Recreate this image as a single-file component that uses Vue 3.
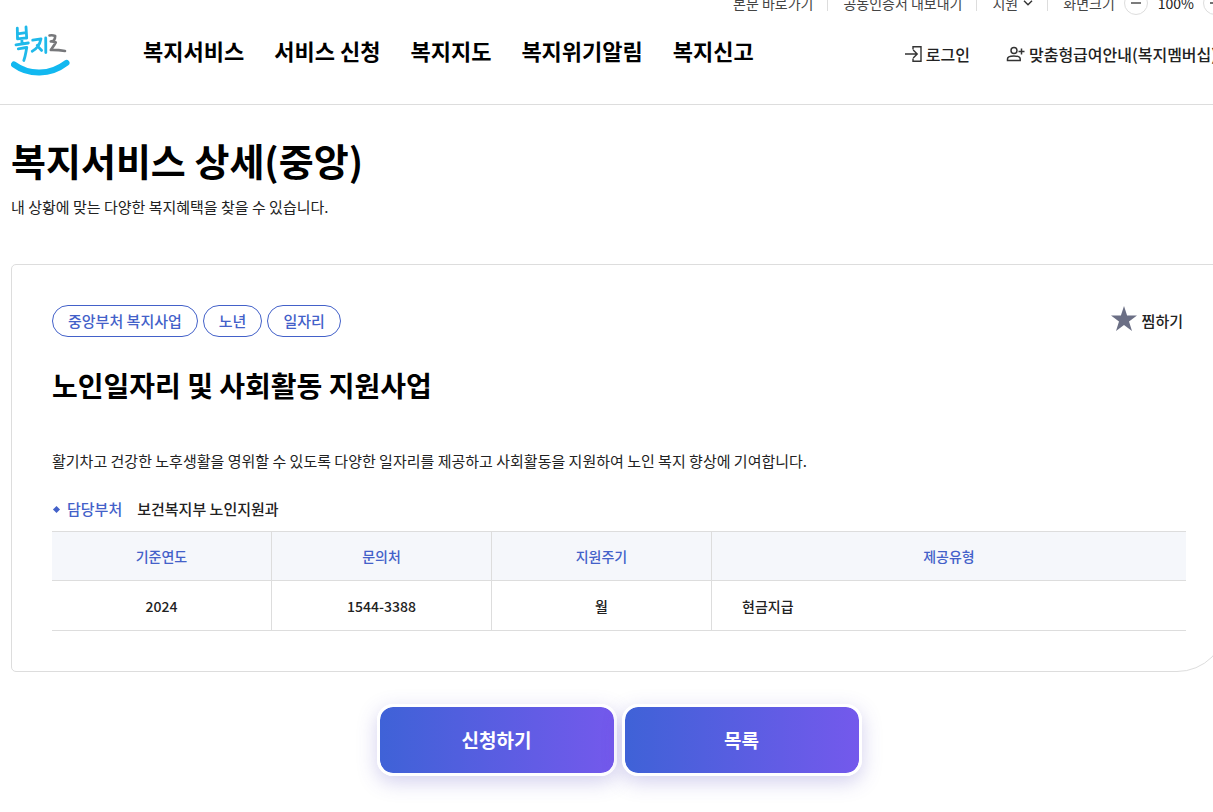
<template>
  <div class="page">
    <header class="header">
      <div class="container">
        <div class="util">
          <a href="#content" class="util-item">본문 바로가기</a>
          <a href="#" class="util-item">공동인증서 내보내기</a>
          <button type="button" class="util-item util-support">
            지원
            <svg width="10" height="6" viewBox="0 0 10 6" fill="none" stroke="#333" stroke-width="1.4">
              <path d="M1 0.8 5 4.8 9 0.8" />
            </svg>
          </button>
          <div class="util-item util-zoom">
            <span>화면크기</span>
            <button type="button" class="zoom-btn" aria-label="축소" @click="cambiarZoom(-10)">
              <svg width="10" height="10" viewBox="0 0 10 10" stroke="#444" stroke-width="1.4"><path d="M0 5H10" /></svg>
            </button>
            <span class="zoom-value">{{ zoom }}%</span>
            <button type="button" class="zoom-btn" aria-label="확대" @click="cambiarZoom(10)">
              <svg width="10" height="10" viewBox="0 0 10 10" stroke="#444" stroke-width="1.4"><path d="M0 5H10M5 0V10" /></svg>
            </button>
          </div>
        </div>

        <div class="header-main">
          <a href="#" class="logo" aria-label="복지로">
            <svg width="60" height="52" viewBox="0 0 60 52" fill="none" stroke-linecap="round" stroke-linejoin="round">
              <g stroke="#1fb9ea" stroke-width="2.8">
                <path d="M6.3 3.2 6.5 13.5M15 1.8 15.7 13M6.5 8.9 15 7.7M6.5 13.9 15.5 12.9M10.8 13.9 11 18M5 19.8 17.3 18" />
                <path d="M7.3 23.8C10.5 23.3 13.5 22.7 15.8 22.5C14.8 27 14.5 31 12.8 35.5" />
                <path d="M21.7 15.2 30 13.8C28.8 19.5 25.8 24 21.2 26.2M26.2 20.3C27.5 22.2 28.8 23.8 30.6 25.4" />
                <path d="M34.7 13 34.8 27.5" />
              </g>
              <path d="M38.5 10.5C40.5 10.1 42.5 10.3 44.2 11C44.3 12.8 43.6 14.4 42.6 15.7L39.8 16.4C41.6 16.3 43.2 16.6 44.8 17.4C43.5 20 41.5 22.5 39.8 24.9C44.5 24.8 49.5 25.2 54 26" stroke="#77787b" stroke-width="2.6" />
              <path d="M3 39.5C18 50.5 39 50.5 55.5 37.8" stroke="#12b8f0" stroke-width="6" />
            </svg>
          </a>
          <nav class="gnb">
            <a v-for="menu in menus" :key="menu" href="#">{{ menu }}</a>
          </nav>
          <div class="member">
            <a href="#">
              <svg width="17" height="18" viewBox="0 0 17 18" fill="none" stroke="#333" stroke-width="1.4">
                <path d="M0 9H12M8.2 5 12.2 9 8.2 13M8 4.5V1.7H16V16.3H8V13.5" />
              </svg>
              로그인
            </a>
            <a href="#">
              <svg width="19" height="18" viewBox="0 0 19 18" fill="none" stroke="#333" stroke-width="1.5">
                <circle cx="8" cy="5.5" r="3" />
                <path d="M1.5 15.5V14C1.5 11.8 4 11 7.8 11S14.2 11.8 14.2 14V15.5ZM12.5 6.5H18.5M15.5 3.5V9.5" />
              </svg>
              맞춤형급여안내(복지멤버십)
            </a>
          </div>
        </div>
      </div>
    </header>

    <main id="content" class="container">
      <h1 class="page-title">복지서비스 상세(중앙)</h1>
      <p class="page-desc">내 상황에 맞는 다양한 복지혜택을 찾을 수 있습니다.</p>

      <section class="card">
        <div class="card-top">
          <ul class="tags">
            <li v-for="tag in tags" :key="tag">{{ tag }}</li>
          </ul>
          <button type="button" class="wish-btn">
            <svg width="26" height="30" viewBox="0 0 26 30" fill="#6b6f85">
              <path d="M13 0 16.1 9.6H26L18 15.5 21 25 13 19.1 5 25 8 15.5 0 9.6H9.9Z" />
            </svg>
            찜하기
          </button>
        </div>

        <h2 class="service-title">노인일자리 및 사회활동 지원사업</h2>
        <p class="service-desc">
          활기차고 건강한 노후생활을 영위할 수 있도록 다양한 일자리를 제공하고 사회활동을 지원하여 노인 복지 향상에 기여합니다.
        </p>

        <dl class="dept">
          <dt>담당부처</dt>
          <dd>보건복지부 노인지원과</dd>
        </dl>

        <table class="info-table">
          <thead>
            <tr>
              <th v-for="dato in datos" :key="dato.titulo" scope="col">{{ dato.titulo }}</th>
            </tr>
          </thead>
          <tbody>
            <tr>
              <td v-for="dato in datos" :key="dato.titulo">{{ dato.valor }}</td>
            </tr>
          </tbody>
        </table>
      </section>

      <div class="actions">
        <button type="button" class="action-btn">신청하기</button>
        <button type="button" class="action-btn">목록</button>
      </div>
    </main>
  </div>
</template>

<script setup>
import { ref } from 'vue';

const menus = ['복지서비스', '서비스 신청', '복지지도', '복지위기알림', '복지신고'];
const tags = ['중앙부처 복지사업', '노년', '일자리'];

const datos = [
  { titulo: '기준연도', valor: '2024' },
  { titulo: '문의처', valor: '1544-3388' },
  { titulo: '지원주기', valor: '월' },
  { titulo: '제공유형', valor: '현금지급' },
];

const zoom = ref(100);

function cambiarZoom(paso) {
  zoom.value = Math.min(150, Math.max(50, zoom.value + paso));
}
</script>

<style>
body {
  background: #fff;
}
</style>

<style scoped>
.page {
  overflow: hidden;
  min-height: 100vh;
  color: #222;
  font-family: "Noto Sans CJK KR", "Noto Sans", sans-serif;
  font-size: 15px;
  line-height: 24px;
}

.page * {
  box-sizing: border-box;
}

a {
  color: inherit;
  text-decoration: none;
}

button {
  padding: 0;
  border: none;
  background: none;
  color: inherit;
  font: inherit;
  cursor: pointer;
}

.container {
  margin: 0 -14px 0 11px;
}

.header {
  margin-top: -10px;
  border-bottom: 1px solid #ddd;
}

.util {
  display: flex;
  justify-content: flex-end;
  align-items: center;
  height: 26px;
  color: #444;
  font-size: 14px;
}

.util-item {
  display: flex;
  align-items: center;
}

.util-item + .util-item::before {
  content: "";
  width: 1px;
  height: 16px;
  margin: 0 15px 0 14px;
  background: #ddd;
}

.util-support svg {
  margin-left: 5px;
}

.zoom-btn {
  display: flex;
  align-items: center;
  justify-content: center;
  width: 24px;
  height: 24px;
  border: 1px solid #ddd;
  border-radius: 50%;
}

.util-zoom .zoom-btn {
  margin-left: 9px;
}

.zoom-value {
  margin-left: 10px;
  color: #222;
}

.header-main {
  display: flex;
  align-items: center;
  height: 88px;
  padding-bottom: 10px;
}

.logo {
  height: 60px;
}

.gnb {
  display: flex;
  gap: 30px;
  margin-left: 72px;
  padding-bottom: 10px;
  color: #000;
  font-size: 22px;
  font-weight: 700;
  line-height: 32px;
}

.member {
  display: flex;
  gap: 36px;
  margin-left: auto;
  padding: 0 10px 2px 0;
  font-size: 16px;
  font-weight: 500;
}

.member a {
  display: flex;
  align-items: center;
  gap: 4px;
  white-space: nowrap;
}

.page-title {
  margin: 0;
  padding-top: 28px;
  color: #000;
  font-size: 38px;
  font-weight: 700;
  line-height: 54px;
}

.page-desc {
  margin: 8px 0 45px;
}

.card {
  padding: 40px;
  border: 1px solid #ddd;
  border-radius: 5px 5px 50px 5px;
}

.card-top {
  display: flex;
  justify-content: space-between;
  align-items: center;
}

.tags {
  display: flex;
  gap: 5px;
  margin: 0;
  padding: 0;
  list-style: none;
}

.tags li {
  height: 32px;
  padding: 0 15px;
  border: 1px solid #4361c9;
  border-radius: 16px;
  color: #4361c9;
  font-weight: 500;
  line-height: 30px;
}

.wish-btn {
  display: flex;
  align-items: center;
  gap: 5px;
  padding-right: 3px;
  font-weight: 500;
}

.service-title {
  margin: 26px 0 42px;
  color: #000;
  font-size: 28px;
  font-weight: 700;
  line-height: 44px;
}

.service-desc {
  margin: 0 0 24px;
}

.dept {
  display: flex;
  align-items: center;
  margin: 0 0 10px;
  font-weight: 500;
}

.dept dt {
  display: flex;
  align-items: center;
  color: #4361c9;
}

.dept dt::before {
  content: "";
  width: 5px;
  height: 5px;
  margin: 0 8px 0 2px;
  background: #4361c9;
  transform: rotate(45deg);
}

.dept dd {
  margin: 0 0 0 15px;
}

.info-table {
  width: 100%;
  border-top: 1px solid #ddd;
  border-spacing: 0;
  table-layout: fixed;
  font-size: 14px;
}

.info-table th,
.info-table td {
  width: 220px;
  height: 49px;
  padding: 0 30px;
  border-right: 1px solid #ddd;
  border-bottom: 1px solid #ddd;
  font-weight: 500;
  text-align: center;
}

.info-table td {
  height: 50px;
}

.info-table th {
  background: #f5f7fb;
  color: #4361c9;
}

.info-table th:last-child,
.info-table td:last-child {
  width: auto;
  border-right: none;
}

.info-table td:last-child {
  text-align: left;
}

.actions {
  display: flex;
  justify-content: center;
  gap: 5px;
  margin: 32px 0 40px;
}

.action-btn {
  width: 240px;
  height: 72px;
  border: 3px solid #fff;
  border-radius: 16px;
  background: linear-gradient(90deg, #3f62d7, #7459ec) padding-box;
  box-shadow: 0 6px 20px rgba(80, 70, 190, 0.26);
  color: #fff;
  font-size: 19px;
  font-weight: 700;
}
</style>
